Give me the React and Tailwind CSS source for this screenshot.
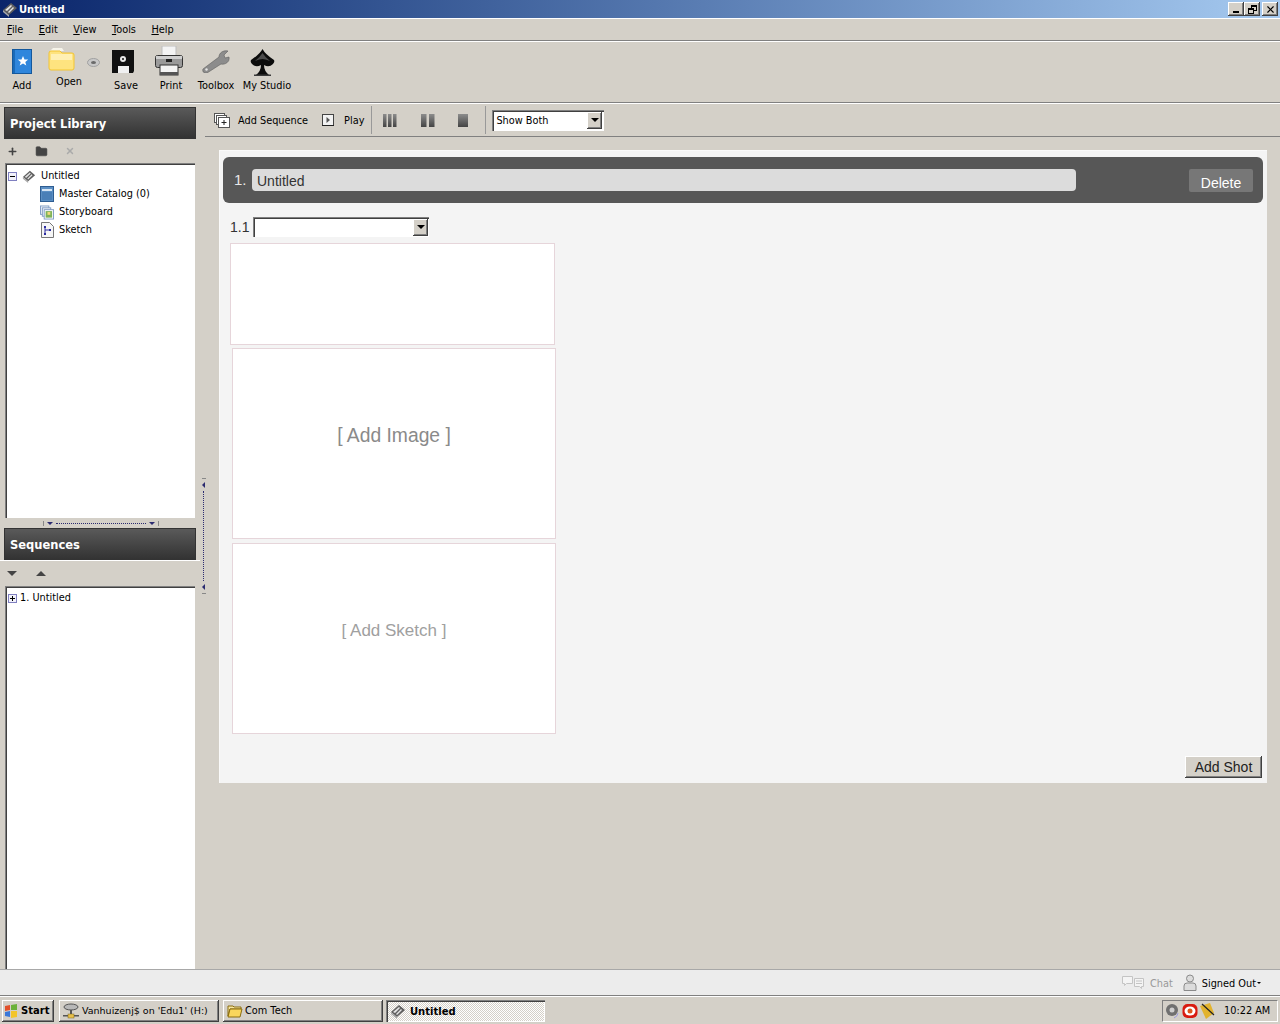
import React from "react";
import { Plus, X, Folder } from "lucide-react";

const raised =
  "shadow-[inset_-1px_-1px_0_#404040,inset_1px_1px_0_#ffffff,inset_-2px_-2px_0_#808080]";
const sunken =
  "shadow-[inset_1px_1px_0_#808080,inset_2px_2px_0_#404040,inset_-1px_-1px_0_#ffffff]";

// small app mark used in the title bar, tree and taskbar
const AppMark = ({ className = "w-4 h-4" }) => (
  <svg viewBox="0 0 16 16" className={className}>
    <path d="M1 9 9 2l6 5-8 7z" fill="#5f5f5f" />
    <path d="M3 9 9 4l1 1-5 5zM6 11l5-5 1 1-5 5z" fill="#e4e4e4" />
    <path d="M1 9l6 5v2L1 11z" fill="#a8a8a8" />
  </svg>
);

const BookIcon = () => (
  <svg viewBox="0 0 20 25" className="w-5 h-[25px] -ml-[1px]">
    <rect x="0.5" y="0.5" width="19" height="24" fill="#2f86dc" stroke="#14589c" />
    <rect x="1" y="1" width="2" height="23" fill="#1a6ab8" />
    <path d="M11 7l1.5 3.4 3.7.2-2.9 2.4 1 3.6-3.3-2-3.3 2 1-3.6-2.9-2.4 3.7-.2z" fill="#fff" />
  </svg>
);

const FolderIcon = () => (
  <svg viewBox="0 0 27 23" className="w-[27px] h-[23px] -ml-[16px]">
    <path d="M2 3 5 0h9l2 3z" fill="#f6f4ea" />
    <path d="M1 5q0-2 2-2h9l2 2h10q2 0 2 2v13q0 2-2 2H3q-2 0-2-2z" fill="#fee37f" stroke="#f2c433" />
    <path d="M3 6h21v6H3z" fill="#fff0b4" />
  </svg>
);

const DiscIcon = () => (
  <svg viewBox="0 0 13 9" className="w-[13px] h-[9px]">
    <ellipse cx="6.5" cy="4.5" rx="6" ry="4" fill="#c8c8c8" stroke="#a0a0a0" />
    <ellipse cx="6.5" cy="4.5" rx="2.5" ry="1.5" fill="#6a6a6a" />
  </svg>
);

const SaveIcon = () => (
  <svg viewBox="0 0 23 23" className="w-[23px] h-[23px] -ml-[6px]">
    <path d="M0 0h22v21l-1 2H0z" fill="#111" />
    <rect x="6" y="16" width="11" height="7" fill="#f0f0f0" />
    <circle cx="11" cy="9" r="3" fill="#e8e8e8" />
    <circle cx="11" cy="9" r="1" fill="#111" />
  </svg>
);

const PrintIcon = () => (
  <svg viewBox="0 0 28 30" className="w-[28px] h-[30px] -ml-[4px]">
    <rect x="7" y="0" width="14" height="10" fill="#f4f4f4" stroke="#bdbdbd" />
    <rect x="0.5" y="9.5" width="27" height="12" rx="2" fill="#9a9a9a" stroke="#333" />
    <rect x="1" y="10" width="26" height="3" fill="#cfcfcf" />
    <rect x="11" y="13" width="6" height="3" fill="#222" />
    <rect x="5" y="19" width="18" height="10" fill="#f4f4f4" stroke="#333" />
    <rect x="5" y="26" width="18" height="3" fill="#555" />
  </svg>
);

const WrenchIcon = () => (
  <svg viewBox="0 0 28 23" className="w-[28px] h-[23px]">
    <path d="M1 19 17 7c0-4 4-7 9-6l-4 4 1 3 4-1c1 5-4 8-8 7L5 23c-3 1-5-2-4-4z" fill="#8c8c8c" stroke="#5e5e5e" strokeWidth="0.6" />
    <circle cx="4.5" cy="19.5" r="1.2" fill="#e6e6e6" />
  </svg>
);

const SpadeIcon = () => (
  <svg viewBox="0 0 25 27" className="w-[25px] h-[27px] -ml-[10px] mt-[3px]">
    <path d="M12.5 0 Q15 5 24 11 Q25 13 23 15 Q19 19 14 16 Q14 22 19 26 L6 26 Q11 22 11 16 Q6 19 2 15 Q0 13 1 11 Q10 5 12.5 0z" fill="#0c0c0c" />
    <path d="M5 12Q10 8 12.5 4Q15 8 20 12Q15 10 12.5 10Q10 10 5 12z" fill="#4c4c4c" />
    <rect x="4" y="25.5" width="17" height="1.5" fill="#3a3a3a" />
  </svg>
);

const StackPlusIcon = () => (
  <svg viewBox="0 0 16 15" className="w-4 h-[15px]" fill="#fff" stroke="#555">
    <rect x="0.5" y="0.5" width="10" height="9" />
    <rect x="2.5" y="2.5" width="10" height="9" />
    <rect x="4.5" y="4.5" width="11" height="10" />
    <path d="M10 7v5M7.5 9.5h5" stroke="#222" />
  </svg>
);

const PlayIcon = () => (
  <svg viewBox="0 0 12 12" className="w-3 h-3">
    <rect x="0.5" y="0.5" width="11" height="11" fill="#f2f2f2" stroke="#444" />
    <path d="M4.5 3v6L8 6z" fill="#555" />
    <path d="M0 11h12v1H0z" fill="#222" />
  </svg>
);

const Bars = ({ xs, w }) => (
  <svg viewBox="0 0 14 13" className="w-[14px] h-[13px]">
    <defs>
      <linearGradient id="barFill" x1="0" y1="0" x2="0" y2="1">
        <stop offset="0" stopColor="#8c8c8c" />
        <stop offset="1" stopColor="#444" />
      </linearGradient>
    </defs>
    {xs.map((x) => (
      <rect key={x} x={x} y="0" width={w} height="13" fill="url(#barFill)" />
    ))}
  </svg>
);

const CatalogIcon = () => (
  <svg viewBox="0 0 14 16" className="w-[14px] h-4">
    <rect x="0.5" y="0.5" width="13" height="15" fill="#5b8fc4" stroke="#2e5d92" />
    <rect x="2" y="3" width="10" height="2" fill="#d8e6f4" />
    <rect x="2" y="6" width="10" height="8" fill="#4a7fb7" />
  </svg>
);

const StoryboardIcon = () => (
  <svg viewBox="0 0 15 15" className="w-[15px] h-[15px]" stroke="#7f9bc4">
    <rect x="0.5" y="0.5" width="9" height="9" fill="#eef3fa" />
    <rect x="2.5" y="2.5" width="9" height="9" fill="#eef3fa" />
    <rect x="4.5" y="4.5" width="10" height="10" fill="#fff" />
    <rect x="6" y="6" width="7" height="7" fill="#7fb35a" stroke="none" />
    <rect x="8" y="7" width="3" height="3" fill="#f1d77a" stroke="none" />
  </svg>
);

const SketchIcon = () => (
  <svg viewBox="0 0 13 16" className="w-[13px] h-4">
    <path d="M.5.5h8l4 4v11H.5z" fill="#f6f6f6" stroke="#777" />
    <path d="M4 5v7M4 8h5" stroke="#2c2ca0" fill="none" />
    <rect x="3" y="4" width="2" height="2" fill="#2c2ca0" />
    <rect x="3" y="11" width="2" height="2" fill="#2c2ca0" />
    <rect x="8" y="7" width="2" height="2" fill="#2c2ca0" />
  </svg>
);

const PersonIcon = () => (
  <svg viewBox="0 0 14 17" className="w-[14px] h-[17px]" stroke="#8a8a8a" fill="#dcdcdc">
    <circle cx="7" cy="4.5" r="3.5" />
    <path d="M1 16.5V12q0-3 3-3h6q3 0 3 3v4.5z" />
  </svg>
);

const ChatIcon = () => (
  <svg viewBox="0 0 22 14" className="w-[22px] h-[14px]" stroke="#c4c4c4" fill="#f4f4f4">
    <path d="M.5.5h10v7h-6l-2 2v-2h-2z" />
    <path d="M12.5 2.5h9v8h-2v2l-2-2h-5z" />
    <path d="M14 5h6M14 7.5h6" fill="none" />
  </svg>
);

const ExpanderBox = ({ open }) => (
  <span className="w-[9px] h-[9px] border border-[#7f7fc0] bg-[#f2f2fa] flex items-center justify-center shrink-0">
    {open ? (
      <span className="w-[5px] h-px bg-black" />
    ) : (
      <span className="relative w-[5px] h-[5px]">
        <span className="absolute left-0 top-[2px] w-[5px] h-px bg-black" />
        <span className="absolute left-[2px] top-0 w-px h-[5px] bg-black" />
      </span>
    )}
  </span>
);

const DropArrow = () => (
  <span className="w-0 h-0 border-x-[4px] border-x-transparent border-t-[4px] border-t-black" />
);

const ComboButton = () => (
  <span className={`w-[15px] h-[17px] bg-[#d4d0c8] flex items-center justify-center ${raised}`}>
    <DropArrow />
  </span>
);

const WindowButton = ({ children }) => (
  <button className={`w-4 h-[14px] bg-[#d4d0c8] flex items-center justify-center text-black ${raised}`}>
    {children}
  </button>
);

const ToolItem = ({ label, width, children, compact }) => (
  <div className={`flex flex-col items-center pt-1 shrink-0 ${width}`}>
    <div className={`flex items-center justify-center ${compact ? "h-[26px]" : "h-[30px]"}`}>{children}</div>
    <span className="mt-[3px] leading-[14px] whitespace-nowrap">{label}</span>
  </div>
);

const PanelHeader = ({ children }) => (
  <div className="ml-1 w-[192px] h-[32px] pt-[3px] shrink-0 flex items-center pl-[5px] border border-[#333] bg-gradient-to-b from-[#5a5a5a] to-[#333333] text-white font-bold text-[11.5px]">
    {children}
  </div>
);

const TreeRow = ({ icon, label }) => (
  <div className="h-[18px] flex items-center pl-[35px] gap-[5px]">
    <span className="w-[14px] flex justify-center">{icon}</span>
    <span className="pt-[1px]">{label}</span>
  </div>
);

const ShotBox = ({ className, textClass, label }) => (
  <div className={`bg-white border border-[#e6d5da] flex items-center justify-center ${className}`}>
    {label && <span className={`font-['Liberation_Sans',sans-serif] ${textClass}`}>{label}</span>}
  </div>
);

const TaskButton = ({ width, children, active }) => (
  <div
    className={`h-[22px] flex items-center gap-[4px] pl-1 shrink-0 ${width} ${
      active
        ? `bg-[repeating-conic-gradient(#ffffff_0_25%,#d4d0c8_0_50%)] bg-[length:2px_2px] font-bold ${sunken}`
        : `bg-[#d4d0c8] ${raised}`
    }`}
  >
    {children}
  </div>
);

export default function App() {
  return (
    <div className="w-[1280px] h-[1024px] overflow-hidden flex flex-col bg-[#d4d0c8] text-black text-[9.75px] font-['DejaVu_Sans',sans-serif]">
      {/* title bar */}
      <div className="h-[18px] shrink-0 flex items-center justify-between pl-[2px] pr-[2px] bg-gradient-to-r from-[#0a246a] to-[#a6caf0] text-white font-bold text-[10px]">
        <div className="flex items-center gap-[1px]">
          <AppMark />
          <span>Untitled</span>
        </div>
        <div className="flex items-center">
          <WindowButton>
            <span className="w-[6px] h-[2px] bg-black mt-[6px]" />
          </WindowButton>
          <WindowButton>
            <span className="relative w-[9px] h-[9px]">
              <span className="absolute right-0 top-0 w-[6px] h-[6px] border border-t-2 border-black" />
              <span className="absolute left-0 bottom-0 w-[6px] h-[6px] border border-t-2 border-black bg-[#d4d0c8]" />
            </span>
          </WindowButton>
          <span className="ml-[2px]">
            <WindowButton>
              <X size={11} strokeWidth={2.5} />
            </WindowButton>
          </span>
        </div>
      </div>

      {/* menu bar */}
      <div className="h-[23px] shrink-0 flex items-center pt-[1px] pl-[7px] gap-[15.5px] border-t border-white border-b border-b-[#808080]">
        <span><u>F</u>ile</span>
        <span><u>E</u>dit</span>
        <span><u>V</u>iew</span>
        <span><u>T</u>ools</span>
        <span><u>H</u>elp</span>
      </div>

      {/* main toolbar */}
      <div className="h-[62px] shrink-0 flex border-t border-white border-b border-b-[#808080]">
        <ToolItem label="Add" width="w-[44px]"><BookIcon /></ToolItem>
        <div className="ml-[2px] shrink-0">
          <ToolItem label="Open" width="w-[46px]" compact><FolderIcon /></ToolItem>
        </div>
        <div className="-ml-[5px] mt-[16px] w-[12px] shrink-0"><DiscIcon /></div>
        <div className="ml-[5px] shrink-0">
          <ToolItem label="Save" width="w-[44px]"><SaveIcon /></ToolItem>
        </div>
        <ToolItem label="Print" width="w-[46px]"><PrintIcon /></ToolItem>
        <ToolItem label="Toolbox" width="w-[44px]"><WrenchIcon /></ToolItem>
        <ToolItem label="My Studio" width="w-[58px]"><SpadeIcon /></ToolItem>
      </div>

      {/* work area */}
      <div className="flex-1 min-h-0 flex border-t border-white">
        {/* left column */}
        <div className="w-[200px] shrink-0 flex flex-col pt-[3px]">
          <PanelHeader>Project Library</PanelHeader>
          <div className="h-[24px] shrink-0 flex items-center pl-[7px] text-[#444]">
            <Plus size={11} strokeWidth={3.5} />
            <span className="ml-[17px]"><Folder size={13} fill="#444" strokeWidth={1} /></span>
            <span className="ml-[17px] text-[#aaa]"><X size={10} strokeWidth={3.5} /></span>
          </div>
          <div className={`ml-[5px] w-[190px] h-[355px] shrink-0 bg-white pt-[4px] ${sunken}`}>
            <div className="h-[18px] flex items-center pl-[3px] gap-[5px]">
              <ExpanderBox open />
              <AppMark className="w-[14px] h-[14px]" />
              <span className="pt-[1px]">Untitled</span>
            </div>
            <TreeRow icon={<CatalogIcon />} label="Master Catalog (0)" />
            <TreeRow icon={<StoryboardIcon />} label="Storyboard" />
            <TreeRow icon={<SketchIcon />} label="Sketch" />
          </div>
          {/* horizontal splitter */}
          <div className="h-[10px] shrink-0 flex items-center pl-[43px] gap-[3px]">
            <span className="w-px h-[5px] bg-[#888]" />
            <span className="w-0 h-0 border-x-[3px] border-x-transparent border-t-[3px] border-t-[#2b2b70]" />
            <span className="w-[90px] border-t border-dotted border-[#2b2b70]" />
            <span className="w-0 h-0 border-x-[3px] border-x-transparent border-t-[3px] border-t-[#2b2b70]" />
            <span className="w-px h-[5px] bg-[#888]" />
          </div>
          <PanelHeader>Sequences</PanelHeader>
          <div className="h-[26px] shrink-0 flex items-center pl-[7px] gap-[19px] border-t border-white">
            <span className="w-0 h-0 border-x-[5px] border-x-transparent border-t-[5px] border-t-[#444]" />
            <span className="w-0 h-0 border-x-[5px] border-x-transparent border-b-[5px] border-b-[#444]" />
          </div>
          <div className={`ml-[5px] w-[190px] flex-1 min-h-0 bg-white pt-[3px] ${sunken}`}>
            <div className="h-[18px] flex items-center pl-[3px] gap-[3px]">
              <ExpanderBox />
              <span className="pt-[1px]">1. Untitled</span>
            </div>
          </div>
        </div>

        {/* vertical splitter */}
        <div className="w-[5px] shrink-0 flex flex-col items-center pl-[2px] pt-[374px]">
          <span className="w-[4px] h-px bg-[#888]" />
          <span className="w-0 h-0 my-[3px] border-y-[3px] border-y-transparent border-r-[3px] border-r-[#2b2b70]" />
          <span className="h-[90px] border-l border-dotted border-[#2b2b70]" />
          <span className="w-0 h-0 my-[3px] border-y-[3px] border-y-transparent border-r-[3px] border-r-[#2b2b70]" />
          <span className="w-[4px] h-px bg-[#888]" />
        </div>

        {/* right column */}
        <div className="flex-1 min-w-0 flex flex-col">
          <div className="h-[33px] shrink-0 flex items-center pl-[9px] border-b border-[#808080]">
            <StackPlusIcon />
            <span className="ml-2 pt-[3px]">Add Sequence</span>
            <span className="ml-[14px]"><PlayIcon /></span>
            <span className="ml-[10px] pt-[3px]">Play</span>
            <span className="ml-[7px] w-px h-7 bg-[#999]" />
            <span className="ml-[11px] flex"><Bars xs={[0, 5, 10]} w={3.5} /></span>
            <span className="ml-[24px] flex"><Bars xs={[0, 8]} w={5.5} /></span>
            <span className="ml-[21px] flex"><Bars xs={[2]} w={10} /></span>
            <span className="ml-[15px] w-px h-7 bg-[#999]" />
            <div className={`ml-[6px] w-[112px] h-[21px] bg-white flex items-center justify-between pl-[4px] pr-[2px] ${sunken}`}>
              <span className="pt-[3px]">Show Both</span>
              <ComboButton />
            </div>
          </div>

          {/* sequence panel */}
          <div className="ml-[14px] mt-[13px] w-[1048px] h-[633px] shrink-0 flex flex-col bg-[#f4f4f4] border-t border-l border-[#fafafa] pl-[3px] pr-[4px] pt-[6px] pb-[5px] font-['Liberation_Sans',sans-serif]">
            <div className="h-[46px] shrink-0 flex items-center rounded-[6px] bg-[#575757] pl-[11px] pr-[10px] text-[#e8e8e8]">
              <span className="w-[18px] text-[15px]">1.</span>
              <div className="w-[824px] h-[22px] rounded-[4px] bg-[#dcdcdc] text-[#333] text-[14px] leading-[24px] pl-[5px]">
                Untitled
              </div>
              <button className="ml-auto w-[64px] h-[23px] pt-[4px] rounded-[2px] bg-[#777777] text-white text-[14px]">
                Delete
              </button>
            </div>
            <div className="h-[20px] mt-[14px] shrink-0 flex items-center pl-[7px] gap-[3px] text-[14px] text-[#333]">
              <span className="w-[20px]">1.1</span>
              <div className={`w-[176px] h-[20px] bg-white flex items-center justify-end pr-[1px] ${sunken}`}>
                <ComboButton />
              </div>
            </div>
            <ShotBox className="w-[325px] h-[102px] ml-[7px] mt-[6px] shrink-0" />
            <ShotBox
              className="w-[324px] h-[191px] ml-[9px] mt-[3px] pb-[15px] shrink-0"
              textClass="text-[19.3px] text-[#8a8a8a]"
              label="[ Add Image ]"
            />
            <ShotBox
              className="w-[324px] h-[191px] ml-[9px] mt-[4px] pb-[15px] shrink-0"
              textClass="text-[17px] text-[#a0a0a0]"
              label="[ Add Sketch ]"
            />
            <div className="flex-1 flex items-end justify-end pr-[1px]">
              <button className={`w-[77px] h-[22px] bg-[#d4d0c8] text-[14px] text-[#222] ${raised}`}>Add Shot</button>
            </div>
          </div>
        </div>
      </div>

      {/* status bar */}
      <div className="h-[27px] shrink-0 flex items-center justify-end pr-[19px] bg-[#ececec] border-t border-[#a8a8a8] border-b border-b-[#808080]">
        <ChatIcon />
        <span className="ml-[6px] pt-[3px] text-[#999]">Chat</span>
        <span className="ml-[10px]"><PersonIcon /></span>
        <span className="ml-[5px] pt-[3px]">Signed Out</span>
        <span className="w-0 h-0 ml-px border-x-[2px] border-x-transparent border-t-[2px] border-t-black" />
      </div>

      {/* taskbar */}
      <div className="h-[28px] shrink-0 flex items-center gap-[4px] pl-[2px] pr-[2px] border-t border-white">
        <TaskButton width="w-[52px]">
          <svg viewBox="0 0 14 14" className="w-[14px] h-[14px] shrink-0 -ml-[2px]">
            <path d="M1 2 6 1v5l-5 1z" fill="#e2502a" />
            <path d="M7 1l6-1v6L7 6z" fill="#6bb13a" />
            <path d="M1 8l5-1v6l-5-1z" fill="#3a78d8" />
            <path d="M7 7l6 0v6l-6 1z" fill="#f3c52b" />
          </svg>
          <span className="font-bold text-[10px] -ml-[1px]">Start</span>
        </TaskButton>
        <TaskButton width="w-[160px] ml-[1px]">
          <svg viewBox="0 0 16 16" className="w-4 h-4 shrink-0">
            <ellipse cx="8" cy="4" rx="7" ry="3" fill="#b8b8b8" stroke="#555" />
            <rect x="7" y="7" width="2" height="5" fill="#555" />
            <rect x="0" y="12" width="16" height="1.5" fill="#555" />
            <rect x="5" y="11" width="6" height="4" fill="#e8c04a" stroke="#7a6420" strokeWidth="0.5" />
          </svg>
          <span className="whitespace-nowrap text-[9.5px] -ml-[1px] pt-[2px]">Vanhuizenj$ on 'Edu1' (H:)</span>
        </TaskButton>
        <TaskButton width="w-[160px]">
          <svg viewBox="0 0 16 14" className="w-4 h-[14px] shrink-0">
            <path d="M1 2h5l1 1h7v2H3L1 12z" fill="#f7e6a0" stroke="#8a6d10" />
            <path d="M3 5h12l-2 8H1z" fill="#f9d65c" stroke="#8a6d10" />
          </svg>
          <span className="-ml-[2px] pt-[2px]">Com Tech</span>
        </TaskButton>
        <div className="-ml-[1px]">
          <TaskButton width="w-[159px]" active>
            <AppMark />
            <span className="text-[10px] pt-[2px]">Untitled</span>
          </TaskButton>
        </div>
        <div className="ml-auto w-[116px] h-[22px] flex items-center pl-[2px] gap-[1px] border border-[#808080] border-r-white border-b-white">
          <svg viewBox="0 0 16 16" className="w-4 h-4 shrink-0">
            <circle cx="7" cy="7" r="6" fill="#707070" />
            <circle cx="7" cy="7" r="2.5" fill="#cfcfcf" />
            <path d="M13 10q0 3-4 5" stroke="#9a9ae0" fill="none" />
          </svg>
          <svg viewBox="0 0 16 16" className="w-4 h-4 shrink-0">
            <rect x="0.5" y="1" width="15" height="14" rx="5" fill="#d81a10" />
            <ellipse cx="8" cy="8" rx="5.5" ry="4.5" fill="#fff" />
            <circle cx="8" cy="8" r="2.5" fill="#e0561c" />
          </svg>
          <svg viewBox="0 0 16 16" className="w-4 h-4 shrink-0">
            <path d="M1 3l10-3 4 10-8 6z" fill="#e2b32e" />
            <path d="M3 1l12 11" stroke="#222" strokeWidth="1.2" />
          </svg>
          <span className="ml-[8px] pt-[2px] whitespace-nowrap">10:22 AM</span>
        </div>
      </div>
    </div>
  );
}
